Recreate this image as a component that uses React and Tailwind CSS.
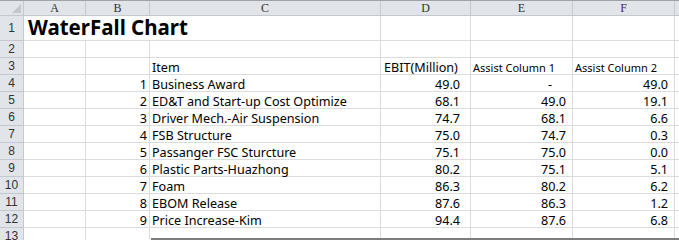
import React from "react";

const cols = ["A", "B", "C", "D", "E", "F"];

const rows = [
  ["1", "Business Award", "49.0", "-", "49.0"],
  ["2", "ED&T and Start-up Cost Optimize", "68.1", "49.0", "19.1"],
  ["3", "Driver Mech.-Air Suspension", "74.7", "68.1", "6.6"],
  ["4", "FSB Structure", "75.0", "74.7", "0.3"],
  ["5", "Passanger FSC Sturcture", "75.1", "75.0", "0.0"],
  ["6", "Plastic Parts-Huazhong", "80.2", "75.1", "5.1"],
  ["7", "Foam", "86.3", "80.2", "6.2"],
  ["8", "EBOM Release", "87.6", "86.3", "1.2"],
  ["9", "Price Increase-Kim", "94.4", "87.6", "6.8"],
];

const gridCols = "grid grid-cols-[24px_62px_64px_231px_90px_102px_102px_1fr]";
const cell = "border-r border-b border-[#dadcdd] flex items-center pt-[3px] whitespace-nowrap";
const rowHead =
  "border-r border-b border-[#c5c9cf] bg-[#e1e4e8] flex items-center justify-center pt-[1px] text-[12px] text-[#333] font-['Liberation_Sans',sans-serif]";

const RowHead = ({ n }) => <div className={rowHead}>{n}</div>;

export default function App() {
  return (
    <div className="relative w-[679px] h-[240px] overflow-hidden bg-white text-[12.6px] text-black font-['Noto_Sans',sans-serif] leading-[13px]">
      {/* column headers */}
      <div className={`${gridCols} h-[16px] border-t border-[#9fa3a8]`}>
        <div className="relative border-r border-b border-[#c5c9cf] bg-[#e1e4e8]">
          <div className="absolute right-[2px] bottom-[2px] w-0 h-0 border-l-[9px] border-l-transparent border-b-[9px] border-b-[#c4c7cb]" />
        </div>
        {cols.map((c) => (
          <div
            key={c}
            className="border-r border-b border-[#c5c9cf] bg-[#e1e4e8] flex items-center justify-center text-[12px] leading-[14px] text-[#333] font-['Liberation_Serif',serif]"
          >
            {c}
          </div>
        ))}
        <div className="border-b border-[#c5c9cf] bg-[#e1e4e8]" />
      </div>

      {/* row 1 - title */}
      <div className={`${gridCols} h-[25px]`}>
        <RowHead n="1" />
        <div className="col-span-3 border-b border-r border-[#dadcdd] flex items-end pl-[4px] pb-[2px]">
          <span className="text-[20.5px] leading-[21px] font-bold">WaterFall Chart</span>
        </div>
        <div className={cell} />
        <div className={cell} />
        <div className={cell} />
        <div className="border-b border-[#dadcdd]" />
      </div>

      {/* row 2 */}
      <div className={`${gridCols} h-[17px]`}>
        <RowHead n="2" />
        {cols.map((c) => (
          <div key={c} className={cell} />
        ))}
        <div className="border-b border-[#dadcdd]" />
      </div>

      {/* row 3 - headings */}
      <div className={`${gridCols} h-[17px]`}>
        <RowHead n="3" />
        <div className={cell} />
        <div className={cell} />
        <div className={`${cell} pl-[2px]`}>Item</div>
        <div className={`${cell} pl-[3px]`}>EBIT(Million)</div>
        <div className={`${cell} pl-[2px] text-[11px]`}>Assist Column 1</div>
        <div className={`${cell} pl-[2px] text-[11px]`}>Assist Column 2</div>
        <div className="border-b border-[#dadcdd]" />
      </div>

      {rows.map((r, i) => (
        <div key={r[0]} className={`${gridCols} h-[17px]`}>
          <RowHead n={i + 4} />
          <div className={cell} />
          <div className={`${cell} justify-end pr-[2px]`}>{r[0]}</div>
          <div className={`${cell} pl-[2px]`}>{r[1]}</div>
          <div className={`${cell} justify-end pr-[10px]`}>{r[2]}</div>
          <div className={`${cell} justify-end ${r[3] === "-" ? "pr-[20px]" : "pr-[6px]"}`}>{r[3]}</div>
          <div className={`${cell} justify-end pr-[6px]`}>{r[4]}</div>
          <div className="border-b border-[#dadcdd]" />
        </div>
      ))}

      {/* row 13 */}
      <div className={`${gridCols} h-[17px]`}>
        <RowHead n="13" />
        {cols.map((c) => (
          <div key={c} className={cell} />
        ))}
        <div />
      </div>

      {/* top edge of the object sitting below the table */}
      <div className="absolute left-[151px] right-0 top-[238px] h-[2px] bg-[#7d7d7d]" />
    </div>
  );
}
